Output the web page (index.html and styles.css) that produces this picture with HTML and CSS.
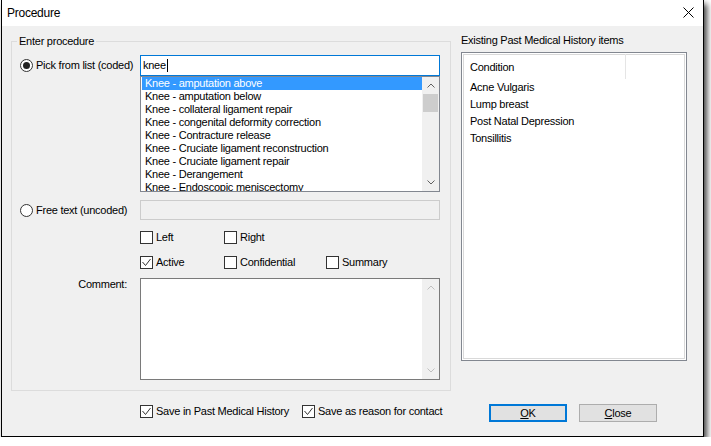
FILE: index.html
```html
<!DOCTYPE html>
<html lang="en">
<head>
<meta charset="utf-8">
<title>Procedure</title>
<link rel="stylesheet" href="styles.css">
</head>
<body>
<div class="window">
  <div class="titlebar">
    <span class="title">Procedure</span>
    <svg class="close-x" width="11" height="11" viewBox="0 0 11 11"><path d="M0.5 0.5L10.5 10.5M10.5 0.5L0.5 10.5" stroke="#000" stroke-width="1" fill="none"/></svg>
  </div>
  <div class="content">
    <div class="top">
      <fieldset class="group">
        <legend>Enter procedure</legend>

        <div class="row row-pick">
          <div class="lbl">
            <svg class="radio" width="13" height="13" viewBox="0 0 13 13"><circle cx="6.5" cy="6.5" r="6" fill="#fff" stroke="#333"/><circle cx="6.5" cy="6.5" r="3.5" fill="#222"/></svg>
            <span>Pick from list (coded)</span>
          </div>
          <div class="search">knee<span class="caret"></span></div>
        </div>

        <div class="row row-list">
          <div class="listbox">
            <ul class="items">
              <li class="sel">Knee - amputation above</li>
              <li>Knee - amputation below</li>
              <li>Knee - collateral ligament repair</li>
              <li>Knee - congenital deformity correction</li>
              <li>Knee - Contracture release</li>
              <li>Knee - Cruciate ligament reconstruction</li>
              <li>Knee - Cruciate ligament repair</li>
              <li>Knee - Derangement</li>
              <li>Knee - Endoscopic meniscectomy</li>
            </ul>
            <div class="vscroll">
              <span class="arrow"><svg width="8" height="5" viewBox="0 0 8 5"><path d="M0.5 4.5L4 1L7.5 4.5" stroke="#606060" fill="none"/></svg></span>
              <div class="track"><span class="thumb"></span></div>
              <span class="arrow"><svg width="8" height="5" viewBox="0 0 8 5"><path d="M0.5 0.5L4 4L7.5 0.5" stroke="#606060" fill="none"/></svg></span>
            </div>
          </div>
        </div>

        <div class="row row-free">
          <div class="lbl">
            <svg class="radio" width="13" height="13" viewBox="0 0 13 13"><circle cx="6.5" cy="6.5" r="6" fill="#fff" stroke="#333"/></svg>
            <span>Free text (uncoded)</span>
          </div>
          <div class="freetext"></div>
        </div>

        <div class="checks checks-1">
          <label class="chk"><svg width="13" height="13" viewBox="0 0 13 13"><rect x="0.5" y="0.5" width="12" height="12" fill="#fff" stroke="#333"/></svg><span>Left</span></label>
          <label class="chk"><svg width="13" height="13" viewBox="0 0 13 13"><rect x="0.5" y="0.5" width="12" height="12" fill="#fff" stroke="#333"/></svg><span>Right</span></label>
        </div>

        <div class="checks checks-2">
          <label class="chk"><svg width="13" height="13" viewBox="0 0 13 13"><rect x="0.5" y="0.5" width="12" height="12" fill="#fff" stroke="#333"/><path d="M2.5 6L5.5 9.5L10.5 3" stroke="#333" fill="none"/></svg><span>Active</span></label>
          <label class="chk"><svg width="13" height="13" viewBox="0 0 13 13"><rect x="0.5" y="0.5" width="12" height="12" fill="#fff" stroke="#333"/></svg><span>Confidential</span></label>
          <label class="chk"><svg width="13" height="13" viewBox="0 0 13 13"><rect x="0.5" y="0.5" width="12" height="12" fill="#fff" stroke="#333"/></svg><span>Summary</span></label>
        </div>

        <div class="row row-comment">
          <div class="lbl-right">Comment:</div>
          <div class="memo">
            <div class="vscroll disabled">
              <span class="arrow"><svg width="8" height="5" viewBox="0 0 8 5"><path d="M0.5 4.5L4 1L7.5 4.5" stroke="#bfbfbf" fill="none"/></svg></span>
              <div class="track"></div>
              <span class="arrow"><svg width="8" height="5" viewBox="0 0 8 5"><path d="M0.5 0.5L4 4L7.5 0.5" stroke="#bfbfbf" fill="none"/></svg></span>
            </div>
          </div>
        </div>
      </fieldset>

      <div class="history">
        <div class="history-label">Existing Past Medical History items</div>
        <div class="listview">
          <div class="lv-head">
            <div class="col-head">Condition</div>
          </div>
          <div class="lv-row">Acne Vulgaris</div>
          <div class="lv-row">Lump breast</div>
          <div class="lv-row">Post Natal Depression</div>
          <div class="lv-row">Tonsillitis</div>
        </div>
      </div>
    </div>

    <div class="footer">
      <label class="chk save-pmh"><svg width="13" height="13" viewBox="0 0 13 13"><rect x="0.5" y="0.5" width="12" height="12" fill="#fff" stroke="#333"/><path d="M2.5 6L5.5 9.5L10.5 3" stroke="#333" fill="none"/></svg><span>Save in Past Medical History</span></label>
      <label class="chk save-reason"><svg width="13" height="13" viewBox="0 0 13 13"><rect x="0.5" y="0.5" width="12" height="12" fill="#fff" stroke="#333"/><path d="M2.5 6L5.5 9.5L10.5 3" stroke="#333" fill="none"/></svg><span>Save as reason for contact</span></label>
      <div class="btn default"><u>O</u>K</div>
      <div class="btn"><u>C</u>lose</div>
    </div>
  </div>
</div>
</body>
</html>
```

FILE: styles.css
```css
* {
  box-sizing: border-box;
}

html,
body {
  margin: 0;
  padding: 0;
  background: #ffffff;
}

body {
  padding-left: 1px;
  font-family: "Liberation Sans", Arial, sans-serif;
  font-size: 11px;
  letter-spacing: -0.25px;
  color: #000;
}

/* dialog frame */
.window {
  width: 703px;
  height: 437px;
  border: 1px solid #000;
  border-top: none;
  background: #f0f0f0;
  display: flex;
  flex-direction: column;
  box-shadow: 3px 4px 6px rgba(0, 0, 0, 0.75);
}

.titlebar {
  height: 26px;
  flex: none;
  background: #fff;
  display: flex;
  justify-content: space-between;
  align-items: flex-start;
}

.title {
  font-size: 12px;
  line-height: 26px;
  padding-left: 5px;
}

.close-x {
  margin: 7px 9px 0 0;
}

.content {
  flex: 1;
  display: flex;
  flex-direction: column;
}

.top {
  display: flex;
  align-items: flex-start;
}

/* left group box */
.group {
  margin: 8px 0 0 9px;
  width: 440px;
  padding: 0;
  min-width: 0;
  border: 1px solid #dcdcdc;
}

.group legend {
  margin-left: 5px;
  padding: 0 2px;
  line-height: 14px;
}

.row {
  display: flex;
  align-items: center;
}

.lbl {
  width: 128px;
  padding-left: 8px;
  display: flex;
  align-items: center;
  gap: 3px;
  white-space: nowrap;
  line-height: 13px;
}

.radio {
  flex: none;
}

.row-pick {
  margin-top: 7px;
  height: 21px;
}

.search {
  width: 300px;
  height: 21px;
  border: 1px solid #0078d7;
  background: #fff;
  padding-left: 2px;
  line-height: 19px;
}

.caret {
  display: inline-block;
  width: 1px;
  height: 13px;
  background: #000;
  vertical-align: -3px;
  margin-left: 1px;
}

.row-list {
  margin-left: 128px;
}

.listbox {
  width: 300px;
  height: 116px;
  border: 1px solid #828790;
  background: #fff;
  display: flex;
}

.items {
  list-style: none;
  margin: 0;
  padding: 0 0 0 1px;
  width: 281px;
  overflow: hidden;
}

.items li {
  height: 13px;
  line-height: 13px;
  padding-left: 3px;
  white-space: nowrap;
}

.items li.sel {
  background: #3399ff;
  color: #fff;
}

.vscroll {
  width: 17px;
  flex: none;
  background: #f0f0f0;
  display: flex;
  flex-direction: column;
}

.arrow {
  height: 17px;
  display: flex;
  align-items: center;
  justify-content: center;
}

.track {
  flex: 1;
}

.thumb {
  display: block;
  height: 18px;
  margin: 0 1px;
  background: #cdcdcd;
}

.row-free {
  margin-top: 8px;
  height: 20px;
}

.freetext {
  width: 300px;
  height: 20px;
  border: 1px solid #cccccc;
  background: #f0f0f0;
}

.checks {
  margin-left: 128px;
  display: grid;
  grid-template-columns: 84px 102px auto;
  height: 13px;
}

.checks-1 {
  margin-top: 11px;
}

.checks-2 {
  margin-top: 12px;
}

.chk {
  display: flex;
  align-items: center;
  gap: 3px;
  height: 13px;
  line-height: 13px;
  white-space: nowrap;
}

.chk svg {
  flex: none;
}

.row-comment {
  margin-top: 9px;
  margin-bottom: 10px;
  align-items: flex-start;
}

.lbl-right {
  width: 128px;
  padding-right: 13px;
  text-align: right;
  line-height: 13px;
}

.memo {
  width: 300px;
  height: 102px;
  border: 1px solid #7a7a7a;
  background: #fff;
  display: flex;
  justify-content: flex-end;
}

/* right panel */
.history {
  margin: 8px 0 0 10px;
  width: 226px;
  display: flex;
  flex-direction: column;
}

.history-label {
  height: 13px;
  line-height: 13px;
  white-space: nowrap;
}

.listview {
  margin-top: 5px;
  height: 309px;
  border: 1px solid #828790;
  background: #fff;
  box-shadow: inset 0 0 0 1px #fff, inset 0 0 0 2px #d9d9d9;
}

.lv-head {
  height: 26px;
  display: flex;
}

.col-head {
  width: 164px;
  padding-left: 8px;
  padding-top: 1px;
  line-height: 25px;
  border-right: 1px solid #e5e5e5;
  margin-top: 1px;
}

.lv-row {
  height: 17px;
  line-height: 17px;
  padding-left: 8px;
}

/* bottom row */
.footer {
  margin-top: 13px;
  height: 18px;
  padding-left: 138px;
  display: flex;
  align-items: flex-start;
}

.footer .chk {
  margin-top: 1px;
}

.save-pmh {
  width: 162px;
}

.save-reason {
  width: 187px;
}

.btn {
  width: 78px;
  height: 18px;
  background: #e1e1e1;
  border: 1px solid #adadad;
  text-align: center;
  line-height: 16px;
}

.btn.default {
  border: 2px solid #0078d7;
  line-height: 14px;
}

.btn + .btn {
  margin-left: 12px;
}
```
